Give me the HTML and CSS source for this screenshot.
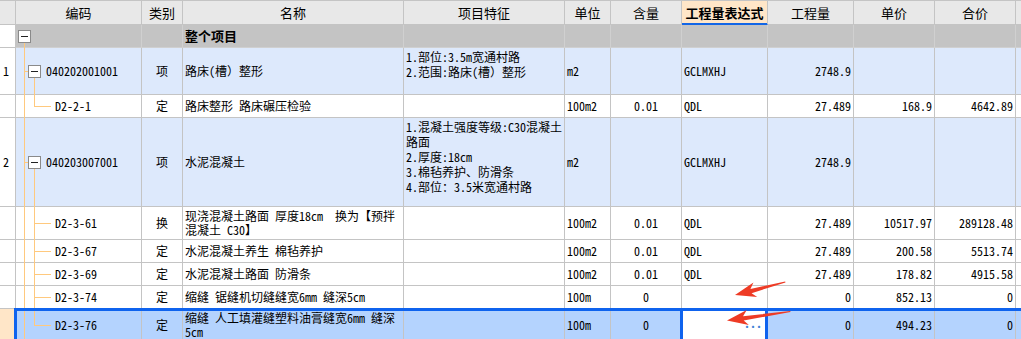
FILE: index.html
```html
<!DOCTYPE html>
<html lang="zh-CN">
  <head>
    <meta charset="UTF-8" />
    <meta name="viewport" content="width=device-width, initial-scale=1.0" />
    <title>分部分项工程量清单</title>
    <link rel="stylesheet" href="styles.css">
  </head>
  <body>
    <div class="sheet">
      <div class="row head">
        <div class="c"></div>
        <div class="c">编码</div>
        <div class="c">类别</div>
        <div class="c">名称</div>
        <div class="c">项目特征</div>
        <div class="c">单位</div>
        <div class="c">含量</div>
        <div class="c active">工程量表达式</div>
        <div class="c">工程量</div>
        <div class="c">单价</div>
        <div class="c">合价</div>
        <div class="c"></div>
      </div>

      <div class="row root">
        <div class="c num"></div>
        <div class="c code"><i class="ln v0 below"></i><span class="box"></span></div>
        <div class="c"></div>
        <div class="c name"><b>整个项目</b></div>
        <div class="c"></div>
        <div class="c"></div>
        <div class="c"></div>
        <div class="c"></div>
        <div class="c"></div>
        <div class="c"></div>
        <div class="c"></div>
        <div class="c"></div>
      </div>

      <!-- 清单 1 -->
      <div class="row item h47">
        <div class="c num">1</div>
        <div class="c code lv1"><i class="ln v0"></i><i class="ln h0"></i><i class="ln v1 below"></i><span class="box"></span>040202001001</div>
        <div class="c mid">项</div>
        <div class="c name">路床(槽）整形</div>
        <div class="c feat"><p>1.部位:3.5m宽通村路</p><p>2.范围:路床(槽）整形</p></div>
        <div class="c">m2</div>
        <div class="c mid"></div>
        <div class="c">GCLMXHJ</div>
        <div class="c right">2748.9</div>
        <div class="c right"></div>
        <div class="c right"></div>
        <div class="c"></div>
      </div>
      <div class="row leaf">
        <div class="c num"></div>
        <div class="c code lv2"><i class="ln v0"></i><i class="ln v1 end"></i><i class="ln h1"></i>D2-2-1</div>
        <div class="c mid">定</div>
        <div class="c name">路床整形 路床碾压检验</div>
        <div class="c feat"></div>
        <div class="c">100m2</div>
        <div class="c mid">0.01</div>
        <div class="c">QDL</div>
        <div class="c right">27.489</div>
        <div class="c right">168.9</div>
        <div class="c right">4642.89</div>
        <div class="c"></div>
      </div>

      <!-- 清单 2 -->
      <div class="row item h89">
        <div class="c num">2</div>
        <div class="c code lv1"><i class="ln v0"></i><i class="ln h0"></i><i class="ln v1 below"></i><span class="box"></span>040203007001</div>
        <div class="c mid">项</div>
        <div class="c name">水泥混凝土</div>
        <div class="c feat"><p>1.混凝土强度等级:C30混凝土路面</p><p>2.厚度:18cm</p><p>3.棉毡养护、防滑条</p><p>4.部位：3.5米宽通村路</p></div>
        <div class="c">m2</div>
        <div class="c mid"></div>
        <div class="c">GCLMXHJ</div>
        <div class="c right">2748.9</div>
        <div class="c right"></div>
        <div class="c right"></div>
        <div class="c"></div>
      </div>
      <div class="row leaf h33">
        <div class="c num"></div>
        <div class="c code lv2"><i class="ln v0"></i><i class="ln v1"></i><i class="ln h1"></i>D2-3-61</div>
        <div class="c mid">换</div>
        <div class="c name">现浇混凝土路面 厚度18cm&nbsp; 换为【预拌混凝土 C30】</div>
        <div class="c feat"></div>
        <div class="c">100m2</div>
        <div class="c mid">0.01</div>
        <div class="c">QDL</div>
        <div class="c right">27.489</div>
        <div class="c right">10517.97</div>
        <div class="c right">289128.48</div>
        <div class="c"></div>
      </div>
      <div class="row leaf">
        <div class="c num"></div>
        <div class="c code lv2"><i class="ln v0"></i><i class="ln v1"></i><i class="ln h1"></i>D2-3-67</div>
        <div class="c mid">定</div>
        <div class="c name">水泥混凝土养生 棉毡养护</div>
        <div class="c feat"></div>
        <div class="c">100m2</div>
        <div class="c mid">0.01</div>
        <div class="c">QDL</div>
        <div class="c right">27.489</div>
        <div class="c right">200.58</div>
        <div class="c right">5513.74</div>
        <div class="c"></div>
      </div>
      <div class="row leaf">
        <div class="c num"></div>
        <div class="c code lv2"><i class="ln v0"></i><i class="ln v1"></i><i class="ln h1"></i>D2-3-69</div>
        <div class="c mid">定</div>
        <div class="c name">水泥混凝土路面 防滑条</div>
        <div class="c feat"></div>
        <div class="c">100m2</div>
        <div class="c mid">0.01</div>
        <div class="c">QDL</div>
        <div class="c right">27.489</div>
        <div class="c right">178.82</div>
        <div class="c right">4915.58</div>
        <div class="c"></div>
      </div>
      <div class="row leaf">
        <div class="c num"></div>
        <div class="c code lv2"><i class="ln v0"></i><i class="ln v1"></i><i class="ln h1"></i>D2-3-74</div>
        <div class="c mid">定</div>
        <div class="c name">缩缝 锯缝机切缝缝宽6mm 缝深5cm</div>
        <div class="c feat"></div>
        <div class="c">100m</div>
        <div class="c mid">0</div>
        <div class="c"></div>
        <div class="c right">0</div>
        <div class="c right">852.13</div>
        <div class="c right">0</div>
        <div class="c"></div>
      </div>
      <div class="row leaf sel h33">
        <div class="c num"></div>
        <div class="c code lv2"><i class="ln v0"></i><i class="ln v1 end"></i><i class="ln h1"></i>D2-3-76</div>
        <div class="c mid">定</div>
        <div class="c name">缩缝 人工填灌缝塑料油膏缝宽6mm 缝深5cm</div>
        <div class="c feat"></div>
        <div class="c">100m</div>
        <div class="c mid">0</div>
        <div class="c edit"><span class="more">...</span></div>
        <div class="c right">0</div>
        <div class="c right">494.23</div>
        <div class="c right">0</div>
        <div class="c"></div>
      </div>

      <!-- 标注箭头 -->
      <svg class="marks" width="1021" height="339" viewBox="0 0 1021 339">
        <path class="arrow" transform="translate(735 295) rotate(-14.6)" d="M0 0 L21 -7.5 L16.5 -2 L52 -0.5 L52 0.6 L16.5 2.4 L21 7.5 Z" />
        <path class="arrow" transform="translate(727 320.5) rotate(-8.1)" d="M0 0 L21 -7.5 L16.5 -2 L64 -0.5 L64 0.6 L16.5 2.4 L21 7.5 Z" />
      </svg>
    </div>
  </body>
</html>
```

FILE: styles.css
```css
* {
  box-sizing: border-box;
}
body {
  margin: 0;
  overflow: hidden;
  background: #fff;
  color: #000;
  font-family: "Noto Sans Mono CJK SC", "Noto Sans CJK SC", "DejaVu Sans Mono", monospace;
  font-size: 12px;
}
p {
  margin: 0;
}
.sheet {
  position: relative;
  width: 1021px;
}
.row {
  display: grid;
  grid-template-columns: 16px 126px 41px 221px 161px 46px 71px 86px 86px 81px 81px 1fr;
  height: 23px;
}
.h33 {
  height: 33px;
}
.h47 {
  height: 47px;
}
.h89 {
  height: 89px;
}
.c {
  display: flex;
  align-items: center;
  padding: 0 2px;
  border-right: 1px solid #c4c4c4;
  border-bottom: 1px solid #c4c4c4;
  line-height: 14px;
  overflow: hidden;
}
.c:last-child {
  border-right: none;
}
.mid {
  justify-content: center;
}
.right {
  justify-content: flex-end;
}
.num {
  padding-left: 3px;
  background: #fff;
}
.feat {
  flex-direction: column;
  align-items: flex-start;
  justify-content: flex-start;
  line-height: 15px;
  padding-top: 1px;
}

/* 表头 */
.head {
  height: 25px;
}
.head .c {
  justify-content: center;
  background: #e8e8e8;
  border-top: 1px solid #c4c4c4;
  font-family: "Noto Sans CJK SC", sans-serif;
  font-size: 13px;
}
.head .active {
  background: #ffe6c8;
  font-weight: bold;
  border-bottom-color: #1366e6;
  box-shadow: inset 0 -1px 0 #1366e6;
}

/* 行底色 */
.root .c {
  background: #c4c4c4;
  border-right-color: #d0d0d0;
  border-bottom-color: #d0d0d0;
}
.root .num {
  background: #fff;
  border-right-color: #c4c4c4;
  border-bottom-color: #c4c4c4;
}
.root .name b {
  font-family: "Noto Sans CJK SC", sans-serif;
  font-size: 13px;
}
.item .c {
  background: #dde9fc;
}
.item .num {
  background: #fff;
}
.sel {
  position: relative;
}
.sel .c {
  background: #b4d3fe;
}
.sel .num {
  background: #ffe6c8;
}
.sel::after {
  content: "";
  position: absolute;
  left: 14px;
  top: -1px;
  right: -10px;
  bottom: -10px;
  border: 3px solid #0f63ee;
  pointer-events: none;
}
.sel .edit {
  position: relative;
  overflow: visible;
  background: #fff;
  justify-content: flex-end;
  padding-right: 5px;
}
.edit::after {
  content: "";
  position: absolute;
  left: -2px;
  right: -1px;
  top: -1px;
  bottom: -10px;
  border: 3px solid #0f63ee;
}
.more {
  color: #3f7fd6;
  font-size: 12px;
  font-weight: bold;
  letter-spacing: 0;
  margin-bottom: 5px;
}

/* 树形连线 */
.code {
  position: relative;
  overflow: visible;
}
.lv1 {
  padding-left: 12px;
  gap: 5px;
}
.lv2 {
  padding-left: 39px;
}
.box {
  position: relative;
  flex: none;
  width: 13px;
  height: 13px;
  border: 1px solid #8a8a8a;
  background: #fff;
}
.box::before {
  content: "";
  position: absolute;
  left: 2px;
  right: 2px;
  top: 5px;
  height: 1px;
  background: #222;
}
.ln {
  position: absolute;
  background: #ffc97e;
}
.v0 {
  left: 8px;
  top: 0;
  bottom: -1px;
  width: 1px;
}
.v1 {
  left: 18px;
  top: 0;
  bottom: -1px;
  width: 1px;
}
.v0.below,
.v1.below {
  top: calc(50% + 6px);
}
.v1.end {
  bottom: auto;
  height: 50%;
}
.h0 {
  left: 8px;
  top: 50%;
  width: 4px;
  height: 1px;
}
.h1 {
  left: 18px;
  top: 50%;
  width: 17px;
  height: 1px;
}

/* 标注 */
.marks {
  position: absolute;
  left: 0;
  top: 0;
  pointer-events: none;
}
.arrow {
  fill: #ee3b25;
}
```
